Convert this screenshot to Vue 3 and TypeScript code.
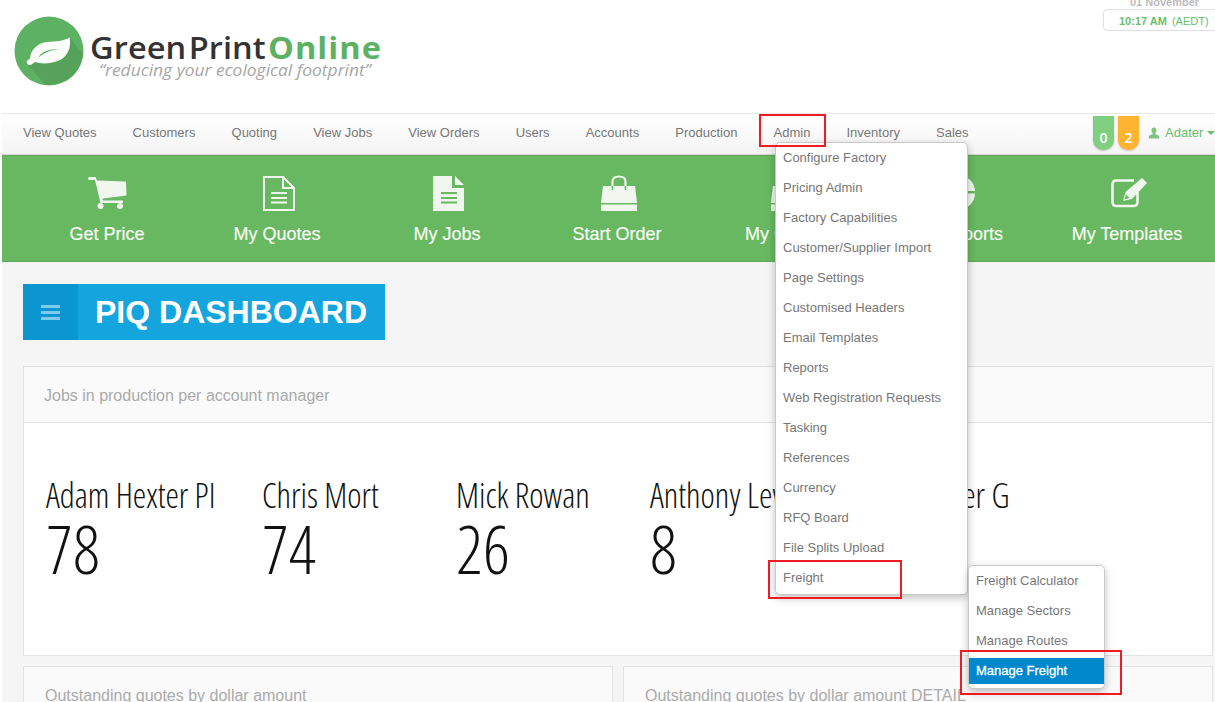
<script setup lang="ts">
interface Tab {
  label: string
  icon: string
}

const navItems = ['View Quotes', 'Customers', 'Quoting', 'View Jobs', 'View Orders', 'Users', 'Accounts', 'Production', 'Admin', 'Inventory', 'Sales']

const tabs: Tab[] = [
  { label: 'Get Price', icon: 'cart' },
  { label: 'My Quotes', icon: 'doc-outline' },
  { label: 'My Jobs', icon: 'doc' },
  { label: 'Start Order', icon: 'bag' },
  { label: 'My Orders', icon: 'bag' },
  { label: 'My Reports', icon: 'pie' },
  { label: 'My Templates', icon: 'edit' },
]

const adminItems = ['Configure Factory', 'Pricing Admin', 'Factory Capabilities', 'Customer/Supplier Import', 'Page Settings', 'Customised Headers', 'Email Templates', 'Reports', 'Web Registration Requests', 'Tasking', 'References', 'Currency', 'RFQ Board', 'File Splits Upload', 'Freight']

const freightItems = ['Freight Calculator', 'Manage Sectors', 'Manage Routes', 'Manage Freight']

const managers = [
  { name: 'Adam Hexter PI', jobs: 78 },
  { name: 'Chris Mort', jobs: 74 },
  { name: 'Mick Rowan', jobs: 26 },
  { name: 'Anthony Lever', jobs: 8 },
  { name: 'Peter G', jobs: 6 },
]
</script>

<template>
  <div class="page">
    <header class="top">
      <div class="logo">
        <svg class="logo-mark" viewBox="0 0 70 70" width="70" height="70">
          <circle cx="35" cy="35" r="34.5" fill="#5cb162" />
          <path d="M14 50 L32 68.9 A34.5 34.5 0 0 0 68.9 38 L56 22 Z" fill="#57a25b" />
          <path d="M13 45 C13.5 44 15 43.5 16 42.5 C16.5 33 25 26.5 33 26 C42 25.5 50 25 55.5 21.5 C58 31 53 41 46 44 C38 47.5 28 48.5 21 46 L17.5 48.5 C15 50 12 48 13 45 Z" fill="#fbfdfa" />
          <path d="M24 42 C27 36 34 33 46 33 C37 34 30 36.5 24 42 Z" fill="#5cb162" />
        </svg>
        <div class="logo-text">
          <div class="logo-name">Green Print<b>Online</b></div>
          <div class="logo-tag">“reducing your ecological footprint”</div>
        </div>
      </div>
      <div class="clock">
        <div class="date">01 November</div>
        <div class="time"><b>10:17 AM</b><span>(AEDT)</span></div>
      </div>
    </header>

    <nav class="nav">
      <a v-for="item in navItems" :key="item" class="nav-item">{{ item }}</a>
      <div class="nav-right">
        <span class="tag tag-green">0</span>
        <span class="tag tag-orange">2</span>
        <span class="user">
          <svg viewBox="0 0 12 12" width="12" height="12"><path d="M6 0.5C4.4 0.5 3.5 1.7 3.5 3.3 3.5 4.6 4 5.6 4.8 6.2L4.8 7 1 8.8 0.7 11.5H11.3L11 8.8 7.2 7V6.2C8 5.6 8.5 4.6 8.5 3.3 8.5 1.7 7.6 0.5 6 0.5Z" fill="#7cc47f" /></svg>
          Adater
          <i class="caret"></i>
        </span>
      </div>
    </nav>

    <div class="tabs">
      <div v-for="tab in tabs" :key="tab.label" class="tab">
        <svg class="tab-icon" viewBox="0 0 40 38" width="40" height="38">
          <g v-if="tab.icon === 'cart'" fill="#f1f7ef">
            <path d="M1 3.5C1 2.5 2 2 3 2H8.5L10 5.5 39 6.5 39.5 20.5 15.5 23.5 16 25.5H36V28H13.5L8 5H3C2 5 1 4.5 1 3.5Z" />
            <circle cx="13.5" cy="31" r="3" />
            <circle cx="33" cy="31" r="3" />
          </g>
          <g v-else-if="tab.icon === 'doc-outline'" fill="none" stroke="#f1f7ef" stroke-width="2">
            <path d="M7 2H26L37 13V35H7Z" />
            <path d="M26 2V13H37" />
            <path d="M14 18H30M14 23H30M14 27.5H30" stroke-width="2.2" />
          </g>
          <g v-else-if="tab.icon === 'doc'">
            <path d="M6 1H25V13H37V36H6Z" fill="#f1f7ef" />
            <path d="M28 1L37 10H28Z" fill="#f1f7ef" />
            <path d="M14 18H30M14 23H30M14 27.5H30" stroke="#68b861" stroke-width="2.2" />
          </g>
          <g v-else-if="tab.icon === 'bag'">
            <path d="M15.5 12V6.5C15.5 3.5 18 1.5 22 1.5 26 1.5 28.5 3.5 28.5 6.5V12" fill="none" stroke="#f1f7ef" stroke-width="2.2" />
            <path d="M6 11H38L40 28H4Z" fill="#f1f7ef" />
            <path d="M4 29.5H40V36H4Z" fill="#f1f7ef" />
            <path d="M15.5 11V15M28.5 11V15" stroke="#68b861" stroke-width="1.6" />
          </g>
          <g v-else-if="tab.icon === 'pie'" fill="#f1f7ef">
            <path d="M19 1A17 17 0 1 0 38 18.5H19Z" />
            <path d="M21 0A17 17 0 0 1 38 16H21Z" />
          </g>
          <g v-else>
            <path d="M30.5 17V27C30.5 29.5 29 31 26.5 31H9.5C7 31 5.5 29.5 5.5 27V9.5C5.5 7 7 5.5 9.5 5.5H27" fill="none" stroke="#f1f7ef" stroke-width="2.6" />
            <path d="M16 26L18.5 17 35 3 40 8 25 24Z" fill="#f1f7ef" />
            <path d="M19 19.5L22.5 23 17.5 24.5Z" fill="#68b861" />
          </g>
        </svg>
        <span class="tab-label">{{ tab.label }}</span>
      </div>
    </div>

    <main class="content">
      <div class="title-bar">
        <span class="title-toggle"><i></i><i></i><i></i></span>
        <h1>PIQ DASHBOARD</h1>
      </div>

      <section class="card card-jobs">
        <div class="card-head">Jobs in production per account manager</div>
        <div class="managers">
          <div v-for="m in managers" :key="m.name" class="manager">
            <div class="manager-name">{{ m.name }}</div>
            <div class="manager-jobs">{{ m.jobs }}</div>
          </div>
        </div>
      </section>

      <div class="card-row">
        <section class="card"><div class="card-head">Outstanding quotes by dollar amount</div></section>
        <section class="card"><div class="card-head">Outstanding quotes by dollar amount DETAIL</div></section>
      </div>
    </main>

    <ul class="menu menu-admin">
      <li v-for="item in adminItems" :key="item">{{ item }}</li>
    </ul>
    <ul class="menu menu-freight">
      <li v-for="item in freightItems" :key="item" :class="{ active: item === 'Manage Freight' }">{{ item }}</li>
    </ul>

    <div class="mark mark-admin"></div>
    <div class="mark mark-freight"></div>
    <div class="mark mark-manage"></div>
  </div>
</template>

<style scoped>
.page {
  position: relative;
  width: 1215px;
  height: 702px;
  overflow: hidden;
  background: #fff;
  padding-left: 2px;
  box-sizing: border-box;
  font-family: "Liberation Sans", Arial, sans-serif;
  color: #777;
}

.top {
  position: relative;
  height: 113px;
  box-sizing: border-box;
}

.logo {
  display: flex;
  gap: 6px;
  padding: 16px 0 0 12px;
}

.logo-text {
  padding-top: 13px;
}

.logo-name {
  font-family: "Open Sans", sans-serif;
  font-size: 31px;
  line-height: 36px;
  font-weight: 600;
  letter-spacing: 0.1px;
  word-spacing: -6px;
  color: #333;
  white-space: nowrap;
  transform: scaleX(1.05);
  transform-origin: left;
}

.logo-name b {
  margin-left: 2px;
  color: #5cb162;
  font-weight: 700;
  letter-spacing: 1px;
}

.logo-tag {
  margin: -4px 0 0 9px;
  font-family: "Open Sans", sans-serif;
  font-size: 16px;
  line-height: 18px;
  font-style: italic;
  color: #a6a6a6;
  white-space: nowrap;
  transform: scaleX(1.09);
  transform-origin: left;
}

.clock {
  position: absolute;
  right: -4px;
  top: -5px;
  width: 116px;
  font-size: 11px;
}

.date {
  height: 14px;
  line-height: 14px;
  padding-left: 27px;
  color: #bbb;
  font-weight: 700;
}

.time {
  height: 22px;
  line-height: 22px;
  box-sizing: border-box;
  border: 1px solid #e0e0e0;
  border-radius: 4px;
  padding-left: 15px;
  color: #68c06c;
}

.time span {
  margin-left: 5px;
}

.nav {
  height: 42px;
  box-sizing: border-box;
  border-top: 1px solid #eaeaea;
  border-bottom: 1px solid #d8d8d8;
  background: linear-gradient(#fff, #f4f4f4);
  display: flex;
  align-items: center;
  padding-left: 21px;
  gap: 36.1px;
  font-size: 13px;
}

.nav-item {
  white-space: nowrap;
  padding-bottom: 4px;
}

.nav-right {
  position: absolute;
  left: 1093px;
  top: 116px;
  display: flex;
  gap: 4px;
}

.tag {
  width: 21px;
  height: 34px;
  box-sizing: border-box;
  padding-top: 12px;
  border-radius: 0 0 10px 10px;
  text-align: center;
  color: #fff;
  font-family: "Open Sans", sans-serif;
  font-size: 14px;
  font-weight: 600;
  box-shadow: 0 1px 2px rgba(0, 0, 0, 0.2);
}

.tag-green {
  background: #7ecf7f;
}

.tag-orange {
  background: #ffb431;
}

.user {
  margin-left: 5px;
  padding-top: 9px;
  display: flex;
  align-items: flex-start;
  gap: 5px;
  font-size: 13px;
  color: #68c06c;
  white-space: nowrap;
}

.user svg {
  margin-top: 2px;
}

.caret {
  width: 0;
  height: 0;
  margin: 6px 0 0 -1px;
  border-left: 4px solid transparent;
  border-right: 4px solid transparent;
  border-top: 4px solid #68c06c;
}

.tabs {
  height: 107px;
  box-sizing: border-box;
  background: #68b861;
  border-top: 1px solid #5ea959;
  border-bottom: 1px solid #5ea959;
  padding-left: 20px;
  display: grid;
  grid-template-columns: repeat(7, 170px);
}

.tab {
  display: flex;
  flex-direction: column;
  align-items: center;
  padding-top: 19px;
  color: #f6faf4;
}

.tab-label {
  margin-top: 10px;
  font-size: 18px;
  line-height: 22px;
  white-space: nowrap;
  -webkit-text-stroke: 0.2px #f6faf4;
}

.content {
  height: 440px;
  background: #f5f5f5;
  padding: 22px 0 0 21px;
  box-sizing: border-box;
}

.title-bar {
  display: flex;
  width: 362px;
  height: 56px;
  background: #14a4de;
  color: #fff;
}

.title-toggle {
  width: 55px;
  background: #0b96d2;
  display: flex;
  flex-direction: column;
  justify-content: center;
  align-items: center;
  gap: 3px;
}

.title-toggle i {
  width: 19px;
  height: 3px;
  background: #7ccbec;
}

.title-bar h1 {
  margin: 0 0 0 17px;
  font-size: 32px;
  line-height: 56px;
  font-weight: 700;
  white-space: nowrap;
}

.card {
  background: #fff;
  border: 1px solid #e2e2e2;
  box-sizing: border-box;
}

.card-jobs {
  width: 1190px;
  height: 290px;
  margin-top: 26px;
}

.card-head {
  height: 56px;
  padding: 20px 0 0 20px;
  box-sizing: border-box;
  background: #fafafa;
  border-bottom: 1px solid #e2e2e2;
  font-size: 16px;
  line-height: 18px;
  color: #aaa;
  white-space: nowrap;
}

.managers {
  display: grid;
  grid-template-columns: 216px 194px 194px 277px auto;
  padding: 52px 0 0 22px;
  color: #111;
  font-family: "Open Sans", sans-serif;
  font-weight: 300;
  font-stretch: 75%;
}

.manager {
  white-space: nowrap;
}

.manager-name {
  font-size: 34px;
  line-height: 41px;
}

.manager-jobs {
  font-size: 66px;
  line-height: 64px;
}

.card-row {
  display: grid;
  grid-template-columns: 590px 590px;
  gap: 10px;
  margin-top: 10px;
}

.card-row .card {
  height: 80px;
}

.card-row .card-head {
  padding-left: 21px;
}

.menu {
  position: absolute;
  margin: 0;
  padding: 0;
  list-style: none;
  background: #fff;
  border: 1px solid #c9c9c9;
  border-radius: 5px;
  box-shadow: 0 3px 8px rgba(0, 0, 0, 0.25);
  font-size: 13px;
  box-sizing: border-box;
}

.menu li {
  height: 30px;
  line-height: 29px;
  padding-left: 7px;
  white-space: nowrap;
  color: #777;
}

.menu-admin {
  left: 775px;
  top: 142px;
  width: 193px;
  height: 453px;
}

.menu-freight {
  left: 968px;
  top: 565px;
  width: 137px;
  height: 124px;
}

.menu li.active {
  height: 26px;
  line-height: 25px;
  margin-top: 2px;
  background: #0088cc;
  color: #fff;
  -webkit-text-stroke: 0.3px #fff;
}

.mark {
  position: absolute;
  border: 2px solid #ed1c24;
  box-sizing: border-box;
}

.mark-admin {
  left: 759px;
  top: 114px;
  width: 67px;
  height: 33px;
}

.mark-freight {
  left: 768px;
  top: 560px;
  width: 134px;
  height: 39px;
}

.mark-manage {
  left: 960px;
  top: 650px;
  width: 162px;
  height: 45px;
}
</style>

<style>
html,
body {
  margin: 0;
  background: #fff;
}
</style>
